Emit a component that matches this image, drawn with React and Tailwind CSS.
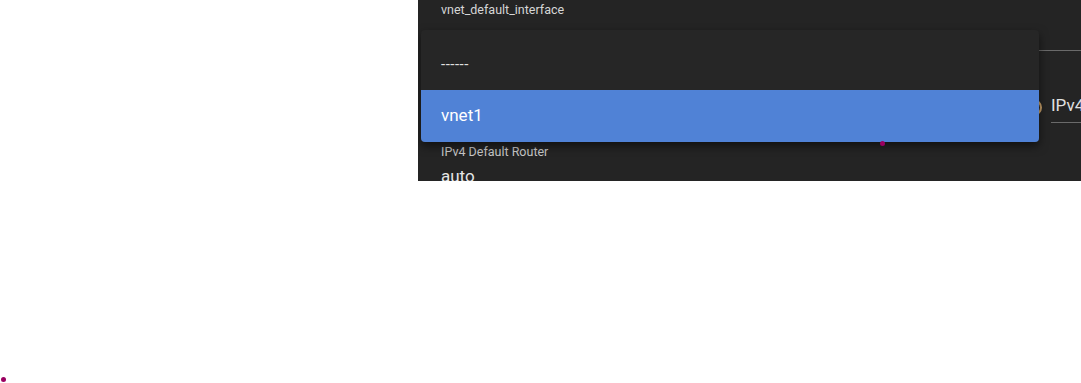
import React from 'react';

const App = () => {
  return (
    <div className="relative w-full h-[383px] bg-white" style={{ fontFamily: 'Roboto, "Noto Sans", sans-serif' }}>
      <div className="relative ml-[418px] w-[663px] h-[181px] bg-[#242424] overflow-hidden">
        <div className="grid grid-cols-[582px_1fr] pl-[23px] pt-[2px]">
          {/* left column */}
          <div className="flex flex-col">
            <p className="text-[12.5px] leading-[16px] text-[#d6d6d6]">vnet_default_interface</p>
            <div className="h-[126px]" />
            <p className="text-[12.5px] leading-[16px] text-[#c8c8c8]">IPv4 Default Router</p>
            <p className="mt-[6px] text-[17px] leading-[20px] text-[#e6e6e6]">auto</p>
          </div>
          {/* right column */}
          <div className="flex flex-col">
            <div className="h-[49px] border-b border-[#6a6a6a]" />
            <div className="mt-[40px] flex items-center gap-[9px]">
              <span className="ml-[2px] w-[17px] h-[17px] rounded-full border-2 border-[#c9a16a] shrink-0" />
              <span className="text-[17px] leading-[20px] text-[#e0e0e0] border-b border-[#6a6a6a] pb-[7px] pt-[4px] flex-1">IPv4</span>
            </div>
          </div>
        </div>

        {/* dropdown menu */}
        <div className="absolute left-[3px] top-[30px] w-[618px] pt-[8px] bg-[#262626] rounded-[4px] shadow-[0_4px_10px_rgba(0,0,0,0.55)] overflow-hidden">
          <div className="h-[52px] flex items-center px-[20px] text-[15px] tracking-[0.5px] text-[#e0e0e0]">------</div>
          <div className="h-[52px] flex items-center px-[20px] text-[17px] text-white bg-[#5082d6]">vnet1</div>
        </div>
      </div>

      <span className="absolute left-[880px] top-[141px] w-[5px] h-[5px] rounded-full bg-[#9a0060]" />
      <span className="absolute left-[1px] top-[377px] w-[5px] h-[5px] rounded-full bg-[#9a0060]" />
    </div>
  );
};

export default App;
